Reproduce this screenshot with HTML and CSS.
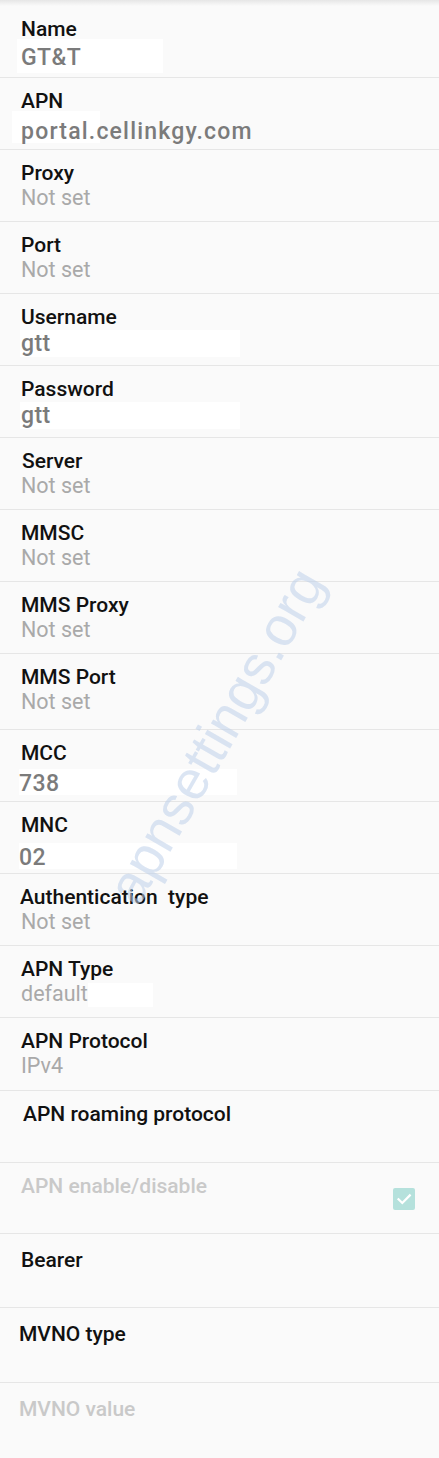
FILE: index.html
```html
<!DOCTYPE html>
<html lang="en">
  <head>
    <meta charset="UTF-8" />
    <meta name="viewport" content="width=device-width, initial-scale=1.0" />
    <title>APN settings</title>
    <link rel="stylesheet" href="styles.css">
  </head>
  <body>
    <main class="apn-list">
      <div class="top-shade"></div>

      <div class="field">
        <div class="label">Name</div>
        <div class="value edited mask mask-name">GT&amp;T</div>
      </div>
      <div class="field">
        <div class="label">APN</div>
        <div class="value edited wide mask mask-apn">portal.cellinkgy.com</div>
      </div>
      <div class="field">
        <div class="label">Proxy</div>
        <div class="value">Not set</div>
      </div>
      <div class="field">
        <div class="label">Port</div>
        <div class="value">Not set</div>
      </div>
      <div class="field">
        <div class="label">Username</div>
        <div class="value edited mask mask-user">gtt</div>
      </div>
      <div class="field">
        <div class="label">Password</div>
        <div class="value edited mask mask-user">gtt</div>
      </div>
      <div class="field">
        <div class="label shift-1">Server</div>
        <div class="value">Not set</div>
      </div>
      <div class="field">
        <div class="label">MMSC</div>
        <div class="value">Not set</div>
      </div>
      <div class="field">
        <div class="label">MMS Proxy</div>
        <div class="value">Not set</div>
      </div>
      <div class="field field-tall">
        <div class="label">MMS Port</div>
        <div class="value">Not set</div>
      </div>
      <div class="field">
        <div class="label">MCC</div>
        <div class="value edited mask mask-code">738</div>
      </div>
      <div class="field">
        <div class="label">MNC</div>
        <div class="value edited mask mask-code mask-low">02</div>
      </div>
      <div class="field">
        <div class="label shift-back">Authentication&nbsp; type</div>
        <div class="value">Not set</div>
      </div>
      <div class="field">
        <div class="label">APN Type</div>
        <div class="value">default<span class="mask-tail"></span></div>
      </div>
      <div class="field field-73">
        <div class="label">APN Protocol</div>
        <div class="value">IPv4</div>
      </div>
      <div class="field">
        <div class="label shift-2">APN roaming protocol</div>
      </div>
      <div class="field field-71 field-check">
        <div class="label disabled">APN enable/disable</div>
        <span class="checkbox">
          <svg viewBox="0 0 22 22" width="22" height="22">
            <path d="M5.5 11.2 L9.3 15 L16.8 7.4" fill="none" stroke="#fff" stroke-width="2.2" stroke-linecap="square" />
          </svg>
        </span>
      </div>
      <div class="field field-74 field-low">
        <div class="label">Bearer</div>
      </div>
      <div class="field field-75 field-low">
        <div class="label shift-back2">MVNO type</div>
      </div>
      <div class="field field-75 field-low field-last">
        <div class="label disabled shift-back2">MVNO value</div>
      </div>

      <div class="watermark">apnsettings.org</div>
    </main>
  </body>
</html>
```

FILE: styles.css
```css
/* page */
html, body {
  margin: 0;
  background-color: #fafafa;
}
.apn-list {
  position: relative;
  width: 439px;
  min-height: 1458px;
  overflow: hidden;
  font-family: Roboto, "Noto Sans", sans-serif;
}
.top-shade {
  height: 6px;
  background: linear-gradient(#e6e6e6, #fafafa);
}

/* rows */
.field {
  box-sizing: border-box;
  height: 72px;
  padding: 11px 21px 0;
  border-bottom: 1px solid #e6e6e6;
}
.field-tall { height: 76px; }
.field-73 { height: 73px; }
.field-71 { height: 71px; }
.field-74 { height: 74px; }
.field-75 { height: 75px; }
.field-low { padding-top: 14px; }
.field-last { border-bottom: none; }

.label {
  font-size: 21px;
  line-height: 24px;
  font-weight: 500;
  color: #111;
  white-space: nowrap;
}
.label.disabled {
  color: #c9c9c9;
}
.shift-1 { margin-left: 1px; }
.shift-2 { margin-left: 2px; }
.shift-back { margin-left: -1px; }
.shift-back2 { margin-left: -2px; }

.value {
  margin-top: 1px;
  font-size: 21.5px;
  line-height: 24px;
  color: #a9a9a9;
  white-space: nowrap;
}

/* values typed in by hand, on a white patch */
.value.edited {
  font-size: 23px;
  line-height: 26px;
  font-weight: 500;
  color: #7b7b7b;
  letter-spacing: 0.4px;
}
.value.wide {
  letter-spacing: 1.2px;
}
.mask {
  box-sizing: border-box;
  background-color: #fff;
}
.mask-name {
  width: 146px;
  height: 34px;
  margin: -2px 0 0 -4px;
  padding: 6px 0 0 4px;
}
.mask-apn {
  width: 88px;
  height: 32px;
  margin: -2px 0 0 -9px;
  padding: 8px 0 0 9px;
}
.mask-user {
  width: 220px;
  height: 27px;
  margin: 1px 0 0 -1px;
  padding: 1px 0 0 1px;
}
.mask-code {
  width: 218px;
  height: 26px;
  margin: 4px 0 0 -2px;
  padding: 2px 0 0 0;
}
.mask-low {
  margin-top: 6px;
}
.mask-tail {
  display: inline-block;
  width: 65px;
  height: 24px;
  vertical-align: top;
  margin-top: 1px;
  background-color: #fff;
}

/* checkbox row */
.field-check {
  display: flex;
  justify-content: space-between;
}
.checkbox {
  width: 22px;
  height: 22px;
  margin: 14px 3px 0 0;
  border-radius: 2px;
  background-color: #b5e1dc;
}
.checkbox svg {
  display: block;
}

/* watermark over the list */
.watermark {
  position: absolute;
  left: 216px;
  top: 736px;
  transform: translate(-50%, -50%) rotate(-60deg);
  font-family: "Liberation Sans", Arial, sans-serif;
  font-size: 55px;
  line-height: 1;
  color: rgba(190, 208, 234, 0.55);
  white-space: nowrap;
  pointer-events: none;
}
```
